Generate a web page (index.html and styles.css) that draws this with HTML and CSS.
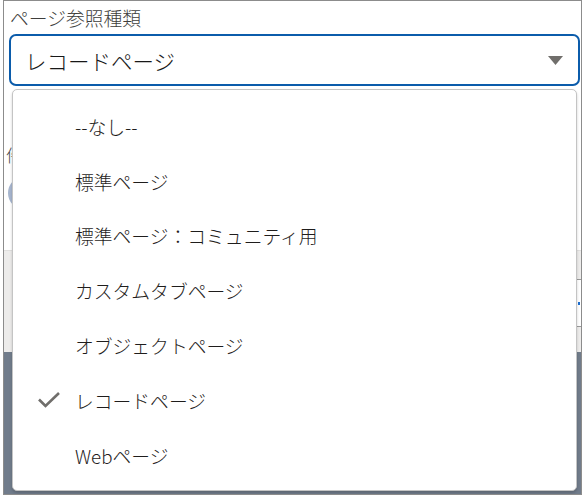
FILE: index.html
```html
<!DOCTYPE html>
<html lang="ja">
<head>
<meta charset="utf-8">
<link rel="stylesheet" href="styles.css">
</head>
<body>
<div class="frame">
  <div class="label">ページ参照種類</div>
  <div class="select">
    <span class="select-value">レコードページ</span>
    <svg class="caret" width="15" height="9" viewBox="0 0 15 9"><path d="M0 0 H15 L7.5 9 Z" fill="#706e6b"/></svg>
  </div>
  <div class="page-white">
    <div class="hidden-label">件名</div>
    <div class="avatar"></div>
  </div>
  <div class="page-gray">
    <div class="field-box"><span class="field-mark"></span></div>
  </div>
  <div class="page-slate"></div>

  <ul class="menu">
    <li class="item">--なし--</li>
    <li class="item">標準ページ</li>
    <li class="item">標準ページ：コミュニティ用</li>
    <li class="item">カスタムタブページ</li>
    <li class="item">オブジェクトページ</li>
    <li class="item selected">
      <svg class="check" width="24" height="18" viewBox="0 0 24 18"><path d="M2 8.5 L8.5 15 L22 2" fill="none" stroke="#706e6b" stroke-width="2.6"/></svg>
      レコードページ
    </li>
    <li class="item">Webページ</li>
  </ul>
</div>
</body>
</html>
```

FILE: styles.css
```css
html, body {
  margin: 0;
  padding: 0;
  background: #ffffff;
}

body {
  font-family: "Noto Sans CJK JP", "Noto Sans", sans-serif;
  color: #2b2826;
}

.frame {
  position: relative;
  margin-left: 3px;
  width: 579px;
  height: 495px;
  border: 1px solid #8c8c8c;
  box-sizing: border-box;
  overflow: hidden;
  display: flex;
  flex-direction: column;
  background: #ffffff;
}

.label {
  height: 33px;
  padding-left: 6px;
  font-size: 18.8px;
  font-weight: 300;
  line-height: 33px;
  color: #3e3e3c;
}

.select {
  margin-left: 5px;
  margin-right: 1px;
  height: 52px;
  box-sizing: border-box;
  border: 2.5px solid #0b5cab;
  border-radius: 7px;
  display: flex;
  align-items: center;
  justify-content: space-between;
  padding: 0 15px 0 14px;
}

.select-value {
  font-size: 21.5px;
  font-weight: 300;
  color: #181818;
}

.caret {
  display: block;
  margin-top: 1px;
}

.page-white {
  height: 164px;
  position: relative;
}

.hidden-label {
  margin-top: 56px;
  margin-left: 2px;
  font-size: 17px;
  font-weight: 300;
  color: #444;
}

.avatar {
  margin-top: 10px;
  margin-left: 4px;
  width: 30px;
  height: 32px;
  border-radius: 50%;
  background: #a7b6cf;
}

.page-gray {
  height: 102px;
  background: #edeceb;
  border-top: 1px solid #e0dfde;
  box-sizing: border-box;
  padding-top: 28px;
  display: flex;
  justify-content: flex-end;
}

.field-box {
  width: 300px;
  height: 48px;
  box-sizing: border-box;
  background: #ffffff;
  border-top: 1px solid #9a9a9a;
  border-bottom: 1px solid #9a9a9a;
  position: relative;
}

.field-mark {
  display: block;
  position: absolute;
  right: 1px;
  top: 22px;
  width: 2px;
  height: 3px;
  background: #1b6ed0;
}

.page-slate {
  flex: 1;
  background: #717c8b;
}

.menu {
  position: absolute;
  left: 8px;
  top: 88px;
  width: 565px;
  height: 402px;
  box-sizing: border-box;
  margin: 0;
  padding: 9px 0 0 0;
  list-style: none;
  background: #ffffff;
  border: 1px solid #c4c4c4;
  border-radius: 5px;
  box-shadow: 0 2px 3px rgba(0, 0, 0, 0.18);
}

.item {
  height: 54.8px;
  display: flex;
  align-items: center;
  padding-left: 62px;
  font-size: 18.8px;
  font-weight: 300;
  color: #1f1d1c;
  position: relative;
}

.check {
  position: absolute;
  left: 24px;
  top: 18px;
}
```
